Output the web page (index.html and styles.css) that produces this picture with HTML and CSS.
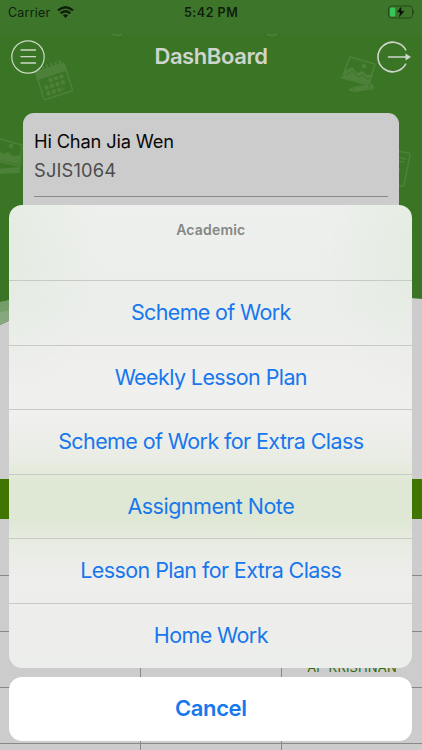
FILE: index.html
```html
<!DOCTYPE html>
<html lang="en">
<head>
<meta charset="utf-8">
<title>DashBoard</title>
<link rel="stylesheet" href="styles.css">
</head>
<body>
<div class="screen">
  <svg class="backdrop" viewBox="0 0 422 479" fill="none" aria-hidden="true">
    <path fill="#3a7526" d="M0 0H422V299Q310 288 180 288Q70 288 0 325Z"/>
    <path fill="#87a77e" d="M0 302Q12 300 35 294V309L0 325Z"/>
    <path fill="#759d69" d="M0 302Q12 300 35 294V309Q15 309 0 312Z"/>
    <path fill="#3d762b" d="M0 0H422V34H0Z"/>
    <path d="M112 34q5 3 10 0M267 34q5 3 10 0" stroke="#4d8139" stroke-width="1.5"/>
    <g transform="translate(54 81) rotate(-18)">
      <rect x="-15" y="-14" width="30" height="29" rx="2" stroke="#4d8139" stroke-width="1.5"/>
      <path fill="#4d8139" d="M-15-14h30v8h-30z"/>
      <path stroke="#4d8139" stroke-width="2" d="M-11-18v6M-6.500-18v6M-2-18v6M2.500-18v6M7-18v6M11.500-18v6"/>
      <path stroke="#4d8139" stroke-width="4" stroke-dasharray="4 1.700" d="M-5-2h17M-11 4h23M-11 10h18"/>
    </g>
    <g transform="translate(360 72)">
      <path stroke="#4d8139" stroke-width="1.500" d="m-10-15 25 7-6 21-27-7z"/>
      <path fill="#4d8139" d="m-15-1 7-4 5 6 5-2 5 4 6-1-4 10-26-6z"/>
      <path stroke="#3a7526" d="m-14 3 6-4 6 6 4-2 5 4 4-1"/>
      <circle cx="4" cy="-6" r="2.200" fill="#4d8139"/>
      <path fill="#4d8139" d="m-12 18 5-3 20-3 1 5-20 3z"/>
      <path stroke="#3a7526" d="m-7 15 1 4M9 12l1 5"/>
    </g>
    <g transform="translate(6 153)">
      <path stroke="#4d8139" stroke-width="1.500" d="m-10-15 26 7-2 21-31-7z"/>
      <path fill="#4d8139" d="m-15-1 7-4 5 6 5-2 5 4 8-1-2 9-28-5z"/>
      <circle cx="5" cy="-7" r="2.200" fill="#4d8139"/>
      <path fill="#4d8139" d="m-12 16 26-2v6l-26 1z"/>
    </g>
    <path stroke="#4d8139" stroke-width="1.500" d="m397 151 12 2q1 0 1 2l-6 30q-1 2-3 1l-4-1M397 157l9 2M397 161l7 1M399 168v3"/>
  </svg>

  <div class="status">
    <span class="carrier">Carrier</span>
    <svg class="wifi" width="17" height="12" viewBox="0 0 17 12" fill="none" stroke="#101d0b" stroke-width="2.300">
      <path d="M1 4.400Q8.500-2 16 4.400M3.700 7.300Q8.500 3.200 13.300 7.300"/>
      <path fill="#101d0b" stroke="none" d="m8.500 12-2.600-2.700q2.600-2 5.200 0z"/>
    </svg>
    <span class="time">5:42 PM</span>
    <svg class="battery" width="28" height="14" viewBox="0 0 28 14" fill="none">
      <rect x="2.500" y="1" width="24" height="12" rx="3" stroke="#254a18"/>
      <rect x="4" y="2.500" width="5.300" height="9" rx="1.500" fill="#37c65c"/>
      <path fill="#254a18" d="M27 5q1 .5 1 2t-1 2z"/>
      <path fill="#050a03" stroke="#3d762b" stroke-width=".6" d="M15.500.8 10.600 7.500h3.200l-1.500 5.900 6.500-7.600h-3.500z"/>
    </svg>
  </div>

  <header class="nav">
    <svg width="34" height="34" viewBox="0 0 34 34" fill="none" stroke="#cdd8c9">
      <circle cx="17" cy="17" r="16.200" stroke-width="1.200"/>
      <path stroke-width="1.300" stroke-linecap="round" d="M10 10h14.500M10 16.700h14.500M10 23h14.500"/>
    </svg>
    <h1 class="title">DashBoard</h1>
    <svg width="35" height="34" viewBox="0 0 35 34" fill="none">
      <path stroke="#cfd5cd" stroke-width="1.600" stroke-linecap="round" d="M28.700 9.800A14.800 14.800 0 1 0 28.700 24.200M11.500 17H30"/>
      <path fill="#cfd5cd" d="m28.500 13.500 5.500 3.500-5.500 3.500z"/>
    </svg>
  </header>

  <section class="card">
    <p class="name">Hi Chan Jia Wen</p>
    <p class="code">SJIS1064</p>
  </section>

  <div class="grid">
    <div class="band"></div>
    <div class="row first"><span></span><span></span><span></span></div>
    <div class="row"><span></span><span></span><span></span></div>
    <div class="row"><span></span><span></span><span class="teacher">AP KRISHNAN</span></div>
    <div class="row"><span></span><span></span><span></span></div>
    <div class="row"><span></span><span></span><span></span></div>
  </div>

  <div class="overlay">
    <div class="sheet">
      <div class="heading">Academic</div>
      <button class="action scheme">Scheme of Work</button>
      <button class="action">Weekly Lesson Plan</button>
      <button class="action">Scheme of Work for Extra Class</button>
      <button class="action note">Assignment Note</button>
      <button class="action">Lesson Plan for Extra Class</button>
      <button class="action">Home Work</button>
    </div>
    <button class="cancel">Cancel</button>
  </div>
</div>
</body>
</html>
```
FILE: styles.css
```css
* { box-sizing: border-box; }
body { margin: 0; font-family: Inter, "Liberation Sans", sans-serif; }
p, h1 { margin: 0; }
button { border: 0; padding: 0; background: none; font-family: inherit; }
.screen { position: relative; width: 422px; height: 750px; overflow: hidden; background: #ccc; display: flex; flex-direction: column; }
.backdrop { position: absolute; inset: 0 auto auto 0; width: 422px; height: 479px; }
.status { position: relative; flex: none; display: grid; grid-template-columns: 49px 127px 56px 1fr 28px; align-items: center; height: 24px; padding: 0 8px; color: #101d0b; }
.carrier { font-size: 12.5px; letter-spacing: .2px; }
.wifi { display: block; }
.time { font-size: 12.5px; font-weight: 600; letter-spacing: .5px; white-space: nowrap; }
.battery { grid-column: 5; margin-top: -1px; }
.nav { position: relative; flex: none; display: flex; justify-content: space-between; align-items: center; height: 65px; padding: 0 10px 0 11px; }
.title { color: #cfd5cd; font-size: 22px; font-weight: 600; letter-spacing: -.4px; line-height: 28px; margin-top: -1px; }
.card { position: relative; flex: none; width: 376px; height: 366px; margin: 24px 0 0 23px; padding: 15px 11px; background: #ccc; border-radius: 11px; }
.name { color: #080808; font-size: 18.3px; line-height: 27px; letter-spacing: -.17px; }
.code { height: 42px; color: #4c4c4c; font-size: 18.3px; line-height: 30px; border-bottom: 1px solid #888; letter-spacing: .15px; }
.grid { position: relative; flex: none; }
.band { height: 40px; background: #407500; }
.row { display: grid; grid-template-columns: 141px 141px 140px; height: 56px; border-bottom: 1px solid #888; }
.row.first { height: 56.500px; }
.row span { border-right: 1px solid #888; }
.row span:last-child { border-right: 0; }
.row .teacher { padding-top: 27px; color: #37680b; font-size: 13px; line-height: 16px; text-align: center; letter-spacing: .15px; }
.overlay { position: absolute; left: 9.300px; right: 9.700px; top: 205px; display: flex; flex-direction: column; gap: 9px; }
.sheet { height: 462.500px; border-radius: 13px; overflow: hidden; background: radial-gradient(90px 150px at 0 40px, rgba(218,231,213,.45), transparent), radial-gradient(90px 150px at 100% 40px, rgba(218,231,213,.45), transparent), linear-gradient(#eef0ed 0, #ebeeeb 100px, #efefee 160px, #f0f0ef 210px, #e9ece4 255px, #dfe8d4 278px, #dfe8d5 315px, #e9ece4 343px, #eeeeed 375px, #eceeeb); }
.heading { height: 75px; padding-top: 16px; color: #858784; font-size: 14px; font-weight: 600; line-height: 17px; text-align: center; letter-spacing: .2px; }
.action { display: block; width: 100%; height: 64.600px; border-top: 1px solid #c8cac6; color: #1777ed; font-size: 21.500px; line-height: 63px; white-space: nowrap; letter-spacing: -.6px; padding-bottom: 1px; }
.scheme { letter-spacing: -.66px; }
.note { letter-spacing: -.5px; }
.cancel { height: 64px; border-radius: 13px; background: #fff; color: #1777ed; font-size: 22px; font-weight: 600; line-height: 63px; letter-spacing: -.4px; }
```
